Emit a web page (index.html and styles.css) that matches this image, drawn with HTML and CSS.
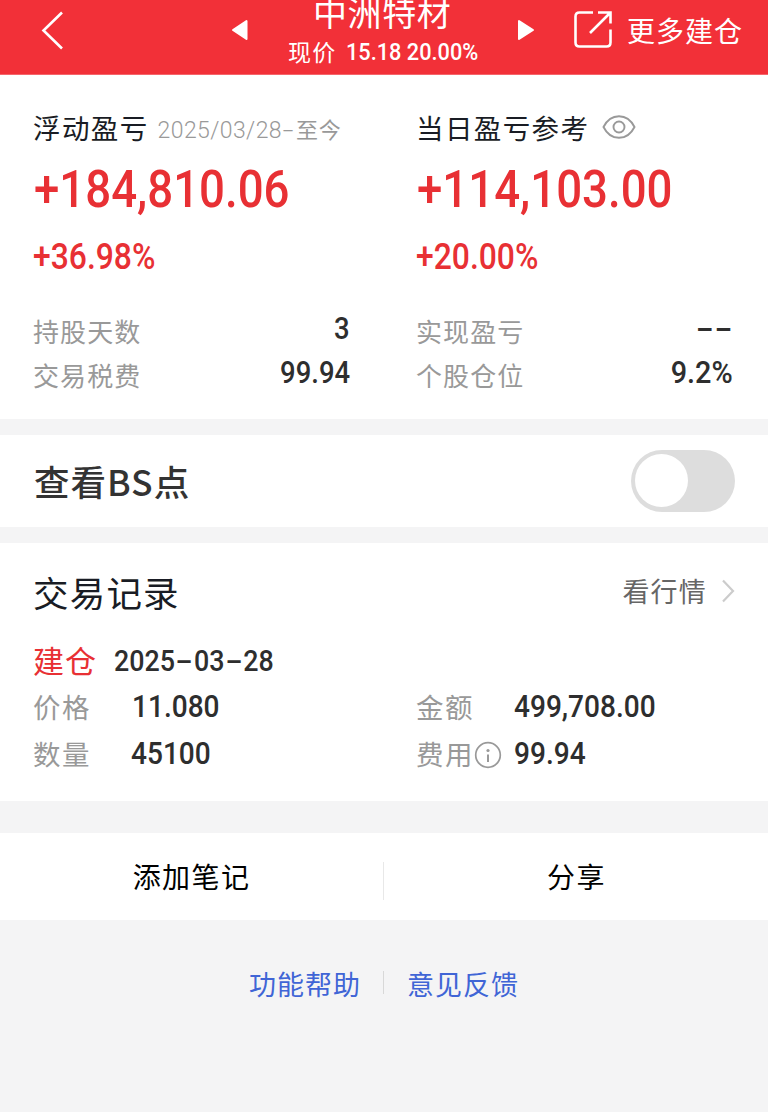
FILE: index.html
```html
<!DOCTYPE html>
<html lang="zh-CN">
<head>
<meta charset="utf-8">
<title>中洲特材</title>
<link rel="stylesheet" href="styles.css">
</head>
<body>
<header class="header">
  <svg class="back" width="24" height="40" viewBox="0 0 24 40"><path d="M21 2.500 2.500 20.500 21 38.500" fill="none" stroke="#fff" stroke-width="2.600"/></svg>
  <svg class="prev" width="18" height="22" viewBox="0 0 18 22"><path d="M2 11 15.500 2v18z" fill="#fff" stroke="#fff" stroke-width="2" stroke-linejoin="round"/></svg>
  <div class="stock">
    <div class="stock-name">中洲特材</div>
    <div class="quote"><span class="quote-label">现价</span><span class="num quote-num">15.18 20.00%</span></div>
  </div>
  <svg class="next" width="18" height="22" viewBox="0 0 18 22"><path d="M16 11 2 2v18z" fill="#fff" stroke="#fff" stroke-width="2" stroke-linejoin="round"/></svg>
  <svg class="open" width="40" height="40" viewBox="0 0 40 40" fill="none" stroke="#fff" stroke-width="2.600"><path d="M20 3.500H6.500Q2.500 3.500 2.500 7.500V33.500Q2.500 37.500 6.500 37.500H33.500Q37.500 37.500 37.500 33.500V20.500M25 3.500H37.500V14.500M37.500 3.500 17 24"/></svg>
  <div class="more">更多建仓</div>
</header>

<section class="summary">
  <div class="col">
    <div class="heading">浮动盈亏<span class="range"><span class="range-num">2025/03/28<i class="dash">-</i></span>至今</span></div>
    <div class="num big">+184,810.06</div>
    <div class="num pct">+36.98%</div>
    <div class="stat"><span class="label">持股天数</span><span class="num value">3</span></div>
    <div class="stat"><span class="label">交易税费</span><span class="num value">99.94</span></div>
  </div>
  <div class="col">
    <div class="heading">当日盈亏参考<svg class="eye" width="34" height="26" viewBox="0 0 34 26" fill="none" stroke="#999" stroke-width="1.900"><path d="M1.500 13C5 6 10.500 2.200 17 2.200S29 6 32.500 13C29 20 23.500 23.800 17 23.800S5 20 1.500 13Z"/><circle cx="17" cy="13" r="5.500"/></svg></div>
    <div class="num big">+114,103.00</div>
    <div class="num pct">+20.00%</div>
    <div class="stat"><span class="label">实现盈亏</span><span class="num value none"><i class="dash">-</i><i class="dash">-</i></span></div>
    <div class="stat"><span class="label">个股仓位</span><span class="num value ratio">9.2%</span></div>
  </div>
</section>

<section class="toggle-row">
  <span class="toggle-label">查看BS点</span>
  <span class="switch"><span class="knob"></span></span>
</section>

<section class="records">
  <div class="records-head">
    <span class="records-title">交易记录</span>
    <span class="market">看行情</span>
    <svg class="arrow" width="14" height="26" viewBox="0 0 14 26"><path d="M2 2.500 12 13 2 23.500" fill="none" stroke="#ccc" stroke-width="2.200"/></svg>
  </div>
  <div class="open-row"><span class="open-label">建仓</span><span class="num date">2025<i class="dash">-</i>03<i class="dash">-</i>28</span></div>
  <div class="detail">
    <span class="item">价格</span><span class="num val price">11.080</span>
    <span class="item">金额</span><span class="num val">499,708.00</span>
  </div>
  <div class="detail">
    <span class="item">数量</span><span class="num val">45100</span>
    <span class="item">费用<svg class="info" width="28" height="28" viewBox="0 0 28 28"><circle cx="14" cy="14" r="12.300" fill="none" stroke="#999" stroke-width="1.700"/><circle cx="14" cy="9.500" r="1.600" fill="#999"/><path d="M14 13.500v7.500" stroke="#999" stroke-width="2"/></svg></span><span class="num val">99.94</span>
  </div>
</section>

<section class="actions">
  <span class="action">添加笔记</span>
  <span class="action">分享</span>
</section>

<footer class="links">
  <span class="link">功能帮助</span>
  <span class="divider"></span>
  <span class="link">意见反馈</span>
</footer>
</body>
</html>
```
FILE: styles.css
```css
* { box-sizing: border-box; }
body {
  margin: 0;
  width: 768px;
  height: 1112px;
  overflow: hidden;
  background: #f4f4f5;
  font-family: "Noto Sans CJK SC", sans-serif;
  color: #191c24;
}
section { background: #fff; }
svg { display: block; flex: none; }
.num {
  font-family: Roboto, sans-serif;
  font-weight: 500;
  white-space: nowrap;
  transform: scaleX(.885);
  transform-origin: left center;
}
.dash { display: inline-block; font-style: normal; transform: scaleX(1.7); margin: 0 4.5px; }

.header {
  display: flex;
  height: 75px;
  border-bottom: 1px solid #f6656b;
  background: #f23038;
  color: #fff;
  overflow: hidden;
}
.back { margin: 10px 0 0 41px; }
.prev { margin: 19px 0 0 166px; }
.stock { width: 190px; margin-left: 39px; }
.stock-name { height: 40px; margin-top: -8px; padding-left: 25px; font-size: 34px; line-height: 40px; letter-spacing: .6px; white-space: nowrap; }
.quote { display: flex; height: 30px; margin-top: 4px; line-height: 30px; white-space: nowrap; }
.quote-label { flex: none; width: 58px; font-size: 23px; letter-spacing: 1.3px; }
.quote-num { font-size: 24px; line-height: 32px; transform: scaleX(.905); }
.next { margin: 19px 0 0 39px; }
.open { margin: 9px 0 0 38px; }
.more { margin-left: 14px; font-size: 28px; line-height: 60px; letter-spacing: 1px; white-space: nowrap; }

.summary { display: flex; height: 344px; padding: 32px 0 0 33px; }
.col { width: 317px; margin-right: 66px; flex: none; }
.heading { display: flex; height: 42px; font-size: 27.5px; line-height: 41px; letter-spacing: 1.4px; white-space: nowrap; }
.range { margin-left: 9px; font-size: 22px; line-height: 43px; letter-spacing: .8px; color: #999; }
.range-num { font-family: Roboto, sans-serif; font-weight: 300; font-size: 23px; letter-spacing: .4px; }
.range .dash { margin: 0 4px 0 3px; transform: scaleX(1.700); }
.eye { margin: 7px 0 0 13px; }
.big { height: 60px; margin: 11px 0 0 1px; font-size: 52px; line-height: 60px; color: #e83034; transform: scaleX(.877); }
.pct { height: 44px; margin: 15px 0 0; font-size: 36px; line-height: 44px; color: #e83034; }
.stat { display: flex; justify-content: space-between; height: 44px; }
.pct + .stat { margin-top: 30px; }
.label { font-size: 26px; line-height: 44px; letter-spacing: 1.1px; color: #999; }
.value { font-size: 31px; line-height: 40px; color: #2e2e2e; transform-origin: right center; }
.none .dash { margin: 0 5.5px; transform: scaleX(1.9); }
.ratio { transform: scaleX(.93); }

.toggle-row { display: flex; justify-content: space-between; height: 92px; margin-top: 16px; padding: 15px 33px 0 34px; }
.toggle-label { font-size: 35.5px; line-height: 62px; letter-spacing: 1px; font-weight: 500; color: #333; }
.switch { width: 104px; height: 62px; padding: 4px; border-radius: 31px; background: #ddd; }
.knob { display: block; width: 53px; height: 53px; border-radius: 50%; background: #fff; }

.records { height: 258px; margin-top: 16px; padding: 23px 33px 0; }
.records-head { display: flex; height: 52px; }
.records-title { font-size: 35.5px; line-height: 51px; letter-spacing: 1.2px; }
.market { margin-left: auto; font-size: 27px; line-height: 49px; letter-spacing: 1.2px; color: #666; }
.arrow { margin: 12px 0 0 14px; }
.open-row { display: flex; height: 44px; margin-top: 20px; }
.open-label { width: 81px; font-size: 31px; line-height: 43px; letter-spacing: 1px; color: #e83034; }
.date { font-size: 29px; line-height: 47px; color: #2e2e2e; transform: scaleX(.925); }
.date .dash { margin: 0 5.3px; transform: scaleX(1.9); }
.detail { display: grid; grid-template-columns: 98px 285px 98px 1fr; height: 47px; }
.item { display: flex; font-size: 27.5px; line-height: 49px; letter-spacing: 1.4px; color: #999; white-space: nowrap; }
.val { font-size: 31px; line-height: 50px; color: #2e2e2e; transform: scaleX(.905); }
.price { margin-left: 1px; }
.info { margin: 12px 0 0 0; }

.actions { display: flex; height: 87px; margin-top: 32px; }
.action { width: 383px; text-align: center; font-size: 28px; line-height: 86px; letter-spacing: 1.4px; color: #000; }
.action + .action { width: 385px; padding-left: 2px; background: linear-gradient(#e8e8e8, #e8e8e8) 0 29px / 1px 38px no-repeat; }

.links { display: flex; padding: 41px 0 0 249px; }
.link { font-size: 27px; line-height: 46px; letter-spacing: 1px; color: #4065d6; white-space: nowrap; }
.divider { width: 1px; height: 23px; margin: 10px 23px 0 22px; background: #d8d8d8; }
```
